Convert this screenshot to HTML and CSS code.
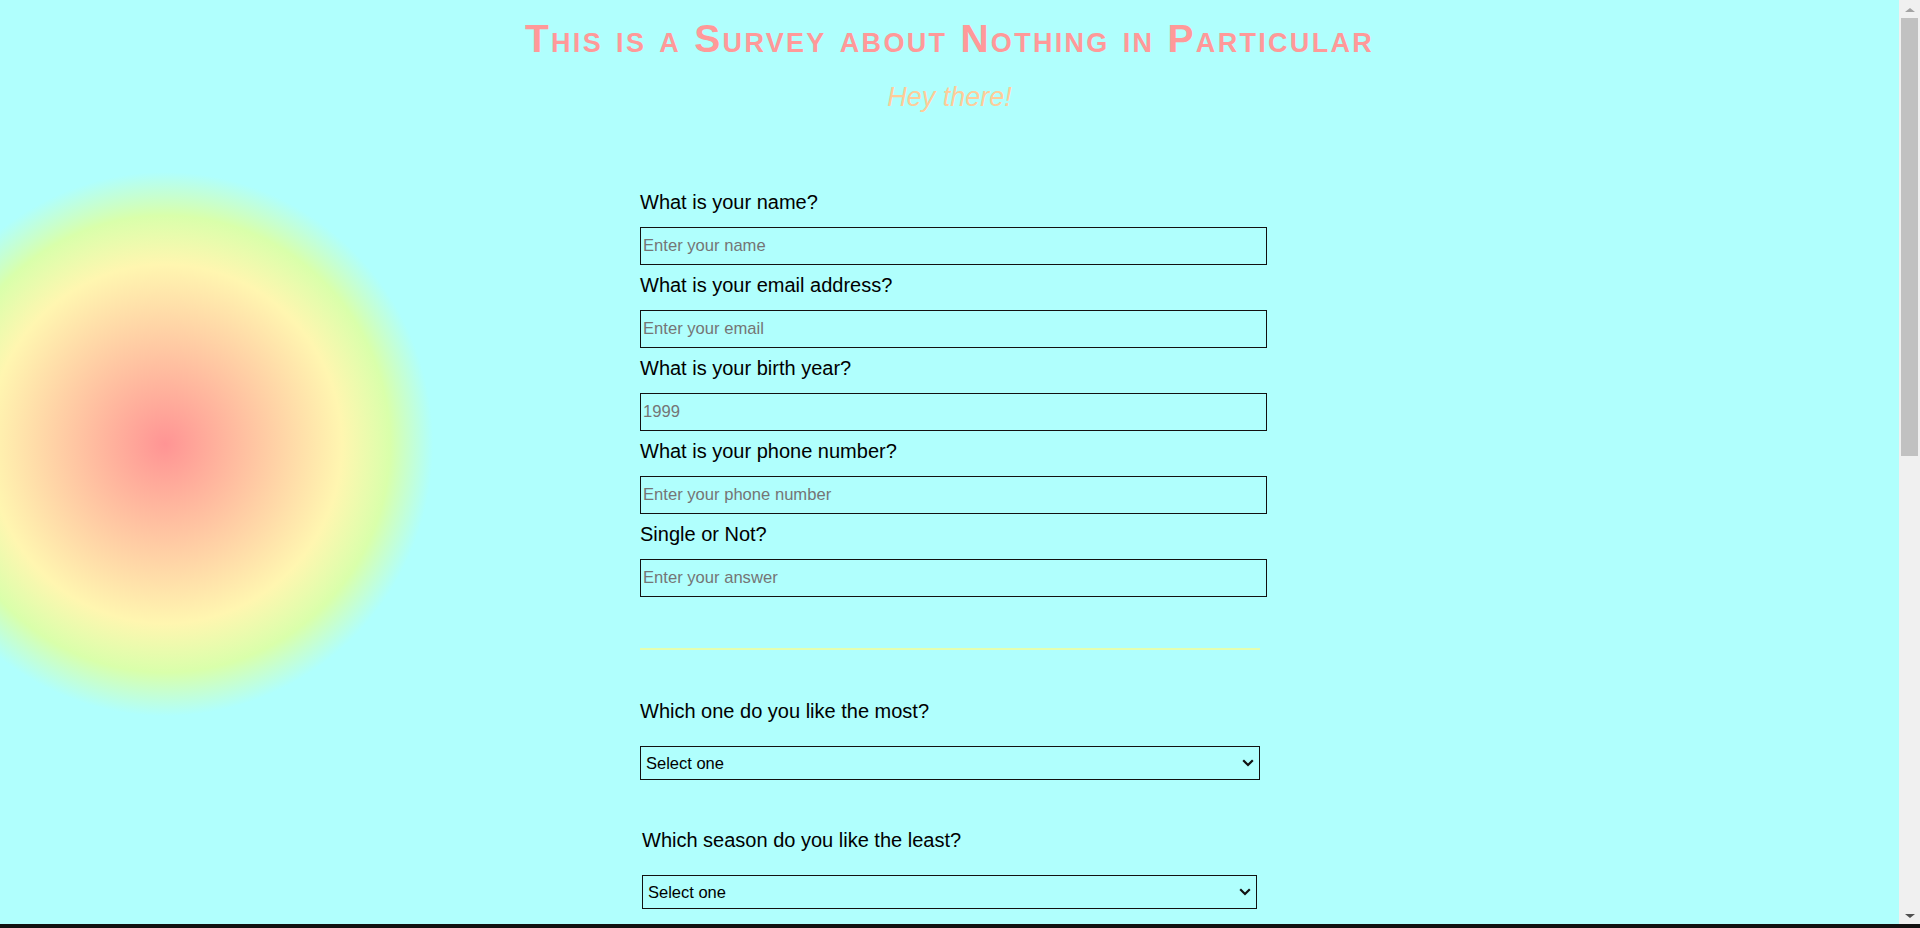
FILE: index.html
```html
<!DOCTYPE html>
<html lang="en">
<head>
<meta charset="utf-8">
<title>Survey about Nothing in Particular</title>
<link rel="stylesheet" href="styles.css">
</head>
<body>
<header class="page-header">
  <h1 id="title" class="title">This is a Survey about Nothing in Particular</h1>
  <p id="description" class="subtitle">Hey there!</p>
</header>
<form id="survey-form" class="survey">
  <div class="field">
    <label id="name-label" class="q" for="name">What is your name?</label>
    <input id="name" class="text-input" type="text" placeholder="Enter your name" required>
  </div>
  <div class="field">
    <label id="email-label" class="q" for="email">What is your email address?</label>
    <input id="email" class="text-input" type="email" placeholder="Enter your email" required>
  </div>
  <div class="field">
    <label id="number-label" class="q" for="number">What is your birth year?</label>
    <input id="number" class="text-input" type="number" min="1900" max="2024" placeholder="1999">
  </div>
  <div class="field">
    <label class="q" for="phone">What is your phone number?</label>
    <input id="phone" class="text-input" type="tel" placeholder="Enter your phone number">
  </div>
  <div class="field">
    <label class="q" for="single">Single or Not?</label>
    <input id="single" class="text-input" type="text" placeholder="Enter your answer">
  </div>

  <hr class="divider">

  <div class="choice">
    <label class="q" for="dropdown">Which one do you like the most?</label>
    <div class="select-wrap">
      <select id="dropdown" class="select">
        <option>Select one</option>
        <option>Cats</option>
        <option>Dogs</option>
        <option>Birds</option>
        <option>Fish</option>
      </select>
      <svg class="chevron" width="12" height="8" viewBox="0 0 12 8" aria-hidden="true"><path d="M1.2 1.3 6 6 10.8 1.3" fill="none" stroke="#111" stroke-width="2.2"/></svg>
    </div>
  </div>
  <div class="choice choice-inset">
    <label class="q" for="season">Which season do you like the least?</label>
    <div class="select-wrap">
      <select id="season" class="select">
        <option>Select one</option>
        <option>Spring</option>
        <option>Summer</option>
        <option>Autumn</option>
        <option>Winter</option>
      </select>
      <svg class="chevron" width="12" height="8" viewBox="0 0 12 8" aria-hidden="true"><path d="M1.2 1.3 6 6 10.8 1.3" fill="none" stroke="#111" stroke-width="2.2"/></svg>
    </div>
  </div>

  <div class="group">
    <p class="q">Would you recommend this survey to a friend?</p>
    <label class="opt"><input type="radio" name="recommend" value="yes"> Definitely</label>
    <label class="opt"><input type="radio" name="recommend" value="maybe"> Maybe</label>
    <label class="opt"><input type="radio" name="recommend" value="no"> Not sure</label>
  </div>

  <div class="group">
    <label class="q" for="comments">Any comments or suggestions?</label>
    <textarea id="comments" class="textarea" placeholder="Enter your comment here..."></textarea>
  </div>

  <div class="group">
    <button id="submit" class="submit" type="submit">Submit</button>
  </div>
</form>

<div class="scrollbar" aria-hidden="true">
  <span class="sb-arrow sb-up"></span>
  <span class="sb-thumb"></span>
  <span class="sb-arrow sb-down"></span>
</div>
<div class="frame-edge"></div>
</body>
</html>
```
FILE: styles.css
```css
html {
  background: #b0fffd;
}
body {
  margin: 0;
  padding-right: 21px;
  font-family: "Liberation Sans", Arial, sans-serif;
  color: #000;
  background:
    radial-gradient(268px 272px at 165px 444px,
      #ff9494 0%,
      #fff6b0 66%,
      #d9ffab 84%,
      rgba(176, 255, 253, 0) 100%) no-repeat,
    #b0fffd;
}

.page-header {
  text-align: center;
  padding-top: 17px;
}
.title {
  margin: 0;
  font-size: 39px;
  line-height: 44px;
  font-weight: bold;
  font-variant: small-caps;
  letter-spacing: 2.3px;
  color: #ff9999;
}
.subtitle {
  margin: 21px 0 0;
  font-size: 27px;
  line-height: 31px;
  font-style: italic;
  color: #ffcc99;
}

.survey {
  width: 619px;
  margin: 78px auto 0;
  padding-bottom: 120px;
}

.q {
  display: block;
  margin: 0;
  font-size: 20px;
  line-height: 22px;
  color: #000;
}

.field {
  display: flex;
  flex-direction: column;
  gap: 14px;
  margin-bottom: 9px;
}
.text-input {
  box-sizing: border-box;
  width: 627px;
  height: 38px;
  margin: 0;
  padding: 1px 2px;
  border: 1px solid #111;
  background: transparent;
  font-family: "Liberation Sans", Arial, sans-serif;
  font-size: 16.6px;
  color: #000;
  outline: none;
}
.text-input::placeholder {
  color: #757575;
}

.divider {
  width: 620px;
  height: 0;
  margin: 51px 0 0;
  border: 0;
  border-top: 2px solid #e4ffb0;
}

.choice {
  display: flex;
  flex-direction: column;
  gap: 24px;
  width: 620px;
  margin-top: 50px;
}
.choice + .choice {
  margin-top: 49px;
}
.choice-inset {
  width: 615px;
  margin-left: 2px;
}
.select-wrap {
  position: relative;
}
.select {
  display: block;
  box-sizing: border-box;
  width: 100%;
  height: 34px;
  margin: 0;
  padding: 0 24px 0 5px;
  border: 1px solid #111;
  border-radius: 0;
  background: transparent;
  -webkit-appearance: none;
  appearance: none;
  font-family: "Liberation Sans", Arial, sans-serif;
  font-size: 16.5px;
  color: #000;
}
.chevron {
  position: absolute;
  right: 6px;
  top: 13px;
  pointer-events: none;
}

.group {
  display: flex;
  flex-direction: column;
  gap: 16px;
  width: 620px;
  margin-top: 60px;
}
.opt {
  display: flex;
  align-items: center;
  gap: 8px;
  font-size: 17px;
}
.textarea {
  box-sizing: border-box;
  width: 100%;
  height: 160px;
  border: 1px solid #111;
  background: transparent;
  font-family: "Liberation Sans", Arial, sans-serif;
  font-size: 16.5px;
  padding: 4px;
}
.submit {
  width: 100%;
  height: 44px;
  border: 1px solid #111;
  background: #ffcc99;
  font-family: "Liberation Sans", Arial, sans-serif;
  font-size: 18px;
  color: #000;
}

/* imitation of the window's classic scrollbar */
.scrollbar {
  position: fixed;
  top: 0;
  right: 0;
  bottom: 0;
  width: 21px;
  background: #f0f0f0;
  display: flex;
  flex-direction: column;
  align-items: center;
}
.sb-arrow {
  width: 0;
  height: 0;
  border-left: 5px solid transparent;
  border-right: 5px solid transparent;
}
.sb-up {
  margin-top: 8px;
  border-bottom: 4px solid #a3a3a3;
}
.sb-thumb {
  width: 17px;
  height: 438px;
  margin-top: 6px;
  background: #c1c1c1;
}
.sb-down {
  margin-top: auto;
  margin-bottom: 10px;
  border-top: 4px solid #505050;
}

.frame-edge {
  position: fixed;
  left: 0;
  right: 0;
  bottom: 0;
  height: 4px;
  background: #111;
}
```
